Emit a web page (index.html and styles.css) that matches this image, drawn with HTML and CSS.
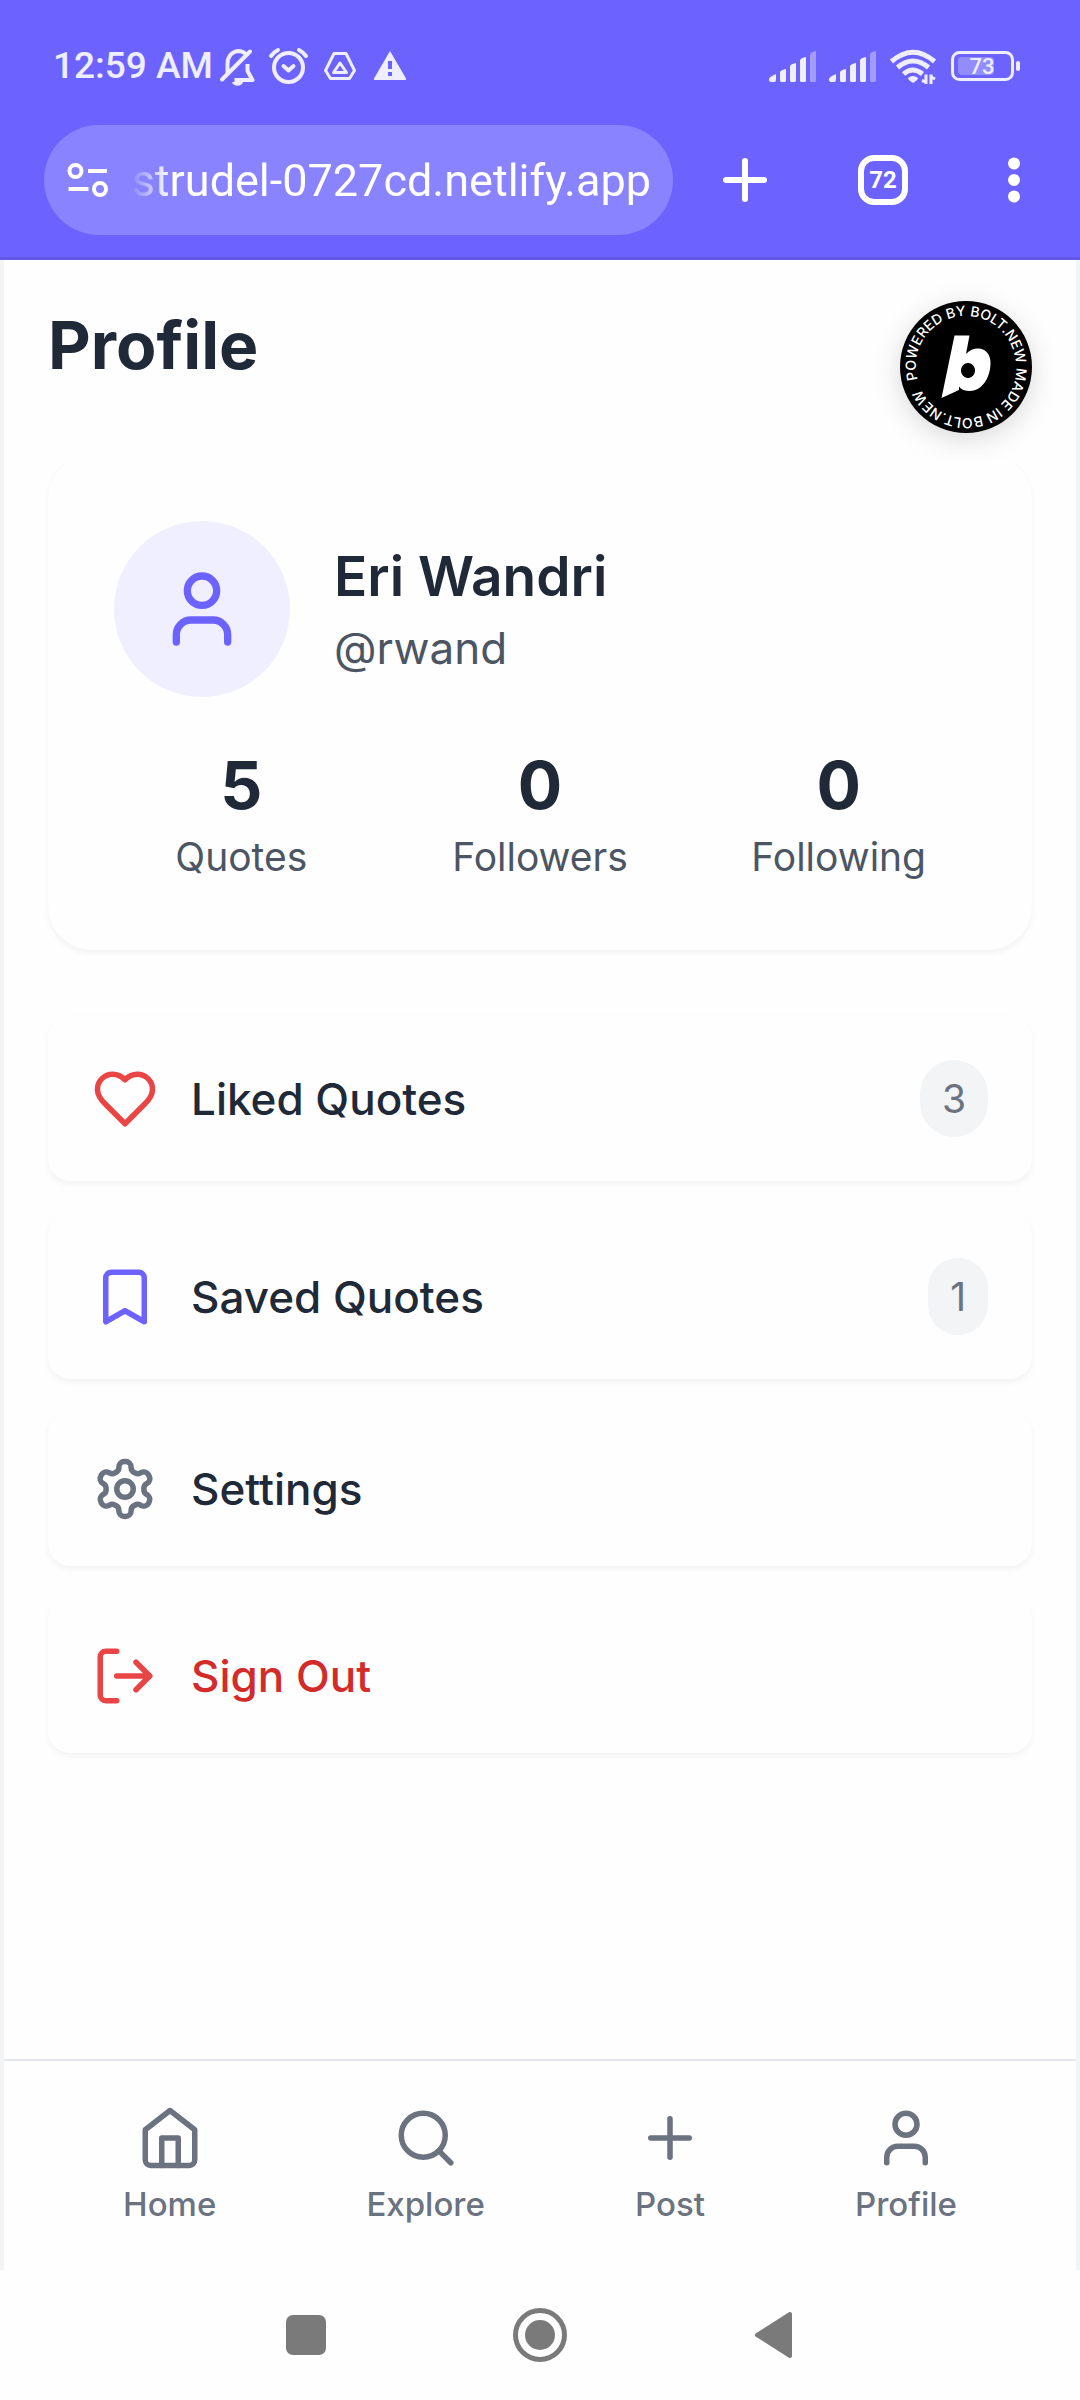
FILE: index.html
```html
<!DOCTYPE html>
<html lang="en">
<head>
<meta charset="utf-8">
<meta name="viewport" content="width=device-width, initial-scale=1">
<title>Profile</title>
<link rel="stylesheet" href="styles.css">
</head>
<body>
<header class="chrome">
  <div class="status">
    <div class="status-left">
      <span class="clock">12:59 AM</span>
      <svg width="37" height="44" viewBox="219 44 37 44" fill="none" stroke="#efeeff" aria-label="Muted">
        <path stroke-width="4" d="M228.500 75V64c0-7 4-12 10-13c5 0 8 2 10 5M248.500 64v7l5 9h-18" stroke-linejoin="round"/>
        <path stroke-width="4" stroke-linecap="round" d="M223 79.500L251 51.500"/>
        <path fill="#efeeff" stroke="none" d="M233 82h11c-1 5-10 5-11 0z"/>
      </svg>
      <svg width="41" height="44" viewBox="269 44 41 44" fill="none" stroke="#efeeff" stroke-width="4" stroke-linecap="round" stroke-linejoin="round" aria-label="Alarm">
        <circle cx="289.500" cy="67.500" r="14.500"/>
        <path d="M284.500 66l5 4.500l5-4.500M272 56q3-4 7-6M300 50q4 2 7 6"/>
      </svg>
      <svg width="36" height="44" viewBox="323 44 36 44" fill="none" stroke="#efeeff" stroke-width="3" stroke-linejoin="round" aria-label="Drive">
        <path d="M335 53.500h12l8.500 17l-5 8h-19l-5-8z"/>
        <path d="M341 63l-6.500 9.500h13z"/>
      </svg>
      <svg width="37" height="44" viewBox="372 44 37 44" aria-label="Warning">
        <path fill="#efeeff" d="M391 51l16 27.500q.5 1.500-1 1.500h-30q-1.500 0-1-1.500z"/>
        <path fill="#6c63ff" d="M389 61h4v8h-4zM389 72h4v4h-4z"/>
      </svg>
    </div>
    <div class="status-right">
      <svg width="48" height="44" viewBox="0 44 48 44" fill="#efeeff" aria-label="Signal 1">
        <path d="M0 79q0-2 7-5v6q0 2-2 2H2q-2 0-2-2zM11 72q1-2 6-3v11q0 2-1 2h-4q-1 0-1-2zM21 66q1-2 6-3v17q0 2-1 2h-4q-1 0-1-2zM31 60q1-2 6-3v23q0 2-1 2h-4q-1 0-1-2z"/>
        <path fill="#a29cff" d="M41 54q1-2 6-3v29q0 2-1 2h-4q-1 0-1-2z"/>
      </svg>
      <svg width="48" height="44" viewBox="0 44 48 44" fill="#efeeff" aria-label="Signal 2">
        <path d="M0 79q0-2 7-5v6q0 2-2 2H2q-2 0-2-2zM11 72q1-2 6-3v11q0 2-1 2h-4q-1 0-1-2zM21 66q1-2 6-3v17q0 2-1 2h-4q-1 0-1-2zM31 60q1-2 6-3v23q0 2-1 2h-4q-1 0-1-2z"/>
        <path fill="#a29cff" d="M41 54q1-2 6-3v29q0 2-1 2h-4q-1 0-1-2z"/>
      </svg>
      <svg width="48" height="44" viewBox="889 44 48 44" fill="none" stroke="#efeeff" aria-label="Wi-Fi">
        <path stroke-width="5" d="M891.500 61.500q21.500-18.500 43 0M897.500 67.500q15.500-13 31 0M903.500 74q9-8 19 0"/>
        <path fill="#efeeff" stroke="none" d="M908 78q5-4 10 0q0 2-5 5q-5-3-5-5z"/>
        <path stroke-width="3" d="M926 74.500v9.500M926 84M922 80.500l4 1.500M931 84v-9.500M935 79l-4-2"/>
      </svg>
      <svg width="72" height="44" viewBox="949 44 72 44" aria-label="Battery 73 percent">
        <rect x="952.500" y="52.500" width="60" height="27" rx="7" fill="none" stroke="#efeeff" stroke-width="3"/>
        <rect x="958" y="57" width="36" height="18" rx="4" fill="#938cff"/>
        <rect x="1016" y="61" width="4" height="10" rx="2" fill="#efeeff"/>
        <text class="battery-text" x="982" y="74" text-anchor="middle">73</text>
      </svg>
    </div>
  </div>
  <div class="toolbar">
    <div class="address">
      <button class="plain" aria-label="Site settings">
        <svg width="42" height="38" viewBox="0 0 42 38" fill="none" stroke="#fff" stroke-width="4">
          <circle cx="9.500" cy="10" r="6"/><path d="M22 10h19M2.500 28h20"/><circle cx="34" cy="28" r="6"/>
        </svg>
      </button>
      <input class="url" type="text" aria-label="Address" value="strudel-0727cd.netlify.app">
    </div>
    <div class="tools">
      <button class="plain" aria-label="New tab">
        <svg width="50" height="50" viewBox="0 0 50 50" stroke="#fff" stroke-width="6" stroke-linecap="round"><path d="M25 6v38M6 25h38"/></svg>
      </button>
      <button class="tabs" aria-label="Tabs">72</button>
      <button class="plain" aria-label="Menu">
        <svg width="12" height="50" viewBox="0 0 12 50" fill="#fff"><circle cx="6" cy="8.500" r="6"/><circle cx="6" cy="25" r="6"/><circle cx="6" cy="41.500" r="6"/></svg>
      </button>
    </div>
  </div>
</header>

<div class="app">
  <main class="content">
    <h1 class="title">Profile</h1>
    <a class="bolt" href="#bolt" aria-label="Made in Bolt.new">
      <svg width="132" height="132" viewBox="0 0 132 132">
        <defs><path id="ring" d="M17.600 78.500A50 50 0 1 1 114.400 53.500A50 50 0 1 1 17.600 78.500"/></defs>
        <circle cx="66" cy="66" r="66" fill="#000"/>
        <text class="bolt-text"><textPath href="#ring">POWERED BY BOLT.NEW MADE IN BOLT.NEW</textPath></text>
        <path fill="#fff" fill-rule="evenodd" d="M54.500 34.500H69.500L66 53C70 48.500 75 47 79 47.500C86.500 48 91 54.500 90.500 63C90 78 81 90 70 90C65 90 61 88.500 59 85.500V89L41.500 97zM68 62A7 7.500 0 1 0 68.010 62z"/>
      </svg>
    </a>

    <section class="card">
      <div class="person">
        <div class="avatar">
          <svg class="icon-lg" viewBox="0 0 24 24"><path d="M19 21v-2a4 4 0 0 0-4-4H9a4 4 0 0 0-4 4v2"/><circle cx="12" cy="7" r="4"/></svg>
        </div>
        <div>
          <h2 class="name">Eri Wandri</h2>
          <p class="handle">@rwand</p>
        </div>
      </div>
      <div class="stats">
        <div><p class="count">5</p><p class="label">Quotes</p></div>
        <div><p class="count">0</p><p class="label">Followers</p></div>
        <div><p class="count">0</p><p class="label">Following</p></div>
      </div>
    </section>

    <div class="menu">
      <button class="item">
        <svg class="icon red" viewBox="0 0 24 24"><path d="M19 14c1.490-1.460 3-3.210 3-5.500A5.500 5.500 0 0 0 16.500 3c-1.760 0-3 .5-4.500 2-1.500-1.500-2.740-2-4.500-2A5.500 5.500 0 0 0 2 8.500c0 2.300 1.500 4.050 3 5.500l7 7Z"/></svg>
        <span class="item-text">Liked Quotes</span><span class="badge">3</span>
      </button>
      <button class="item">
        <svg class="icon violet" viewBox="0 0 24 24"><path d="m19 21-7-4-7 4V5a2 2 0 0 1 2-2h10a2 2 0 0 1 2 2v16z"/></svg>
        <span class="item-text">Saved Quotes</span><span class="badge">1</span>
      </button>
      <button class="item">
        <svg class="icon" viewBox="0 0 24 24"><path d="M12.220 2h-.44a2 2 0 0 0-2 2v.18a2 2 0 0 1-1 1.730l-.43.25a2 2 0 0 1-2 0l-.15-.08a2 2 0 0 0-2.730.73l-.22.38a2 2 0 0 0 .73 2.730l.15.1a2 2 0 0 1 1 1.720v.51a2 2 0 0 1-1 1.740l-.15.09a2 2 0 0 0-.73 2.730l.22.38a2 2 0 0 0 2.730.73l.15-.08a2 2 0 0 1 2 0l.43.25a2 2 0 0 1 1 1.730V20a2 2 0 0 0 2 2h.44a2 2 0 0 0 2-2v-.18a2 2 0 0 1 1-1.730l.43-.25a2 2 0 0 1 2 0l.15.08a2 2 0 0 0 2.730-.73l.22-.39a2 2 0 0 0-.73-2.730l-.15-.08a2 2 0 0 1-1-1.740v-.5a2 2 0 0 1 1-1.740l.15-.09a2 2 0 0 0 .73-2.730l-.22-.38a2 2 0 0 0-2.730-.73l-.15.08a2 2 0 0 1-2 0l-.43-.25a2 2 0 0 1-1-1.730V4a2 2 0 0 0-2-2z"/><circle cx="12" cy="12" r="3"/></svg>
        <span class="item-text">Settings</span>
      </button>
      <button class="item">
        <svg class="icon red" viewBox="0 0 24 24"><path d="M9 21H5a2 2 0 0 1-2-2V5a2 2 0 0 1 2-2h4"/><path d="M16 17l5-5-5-5M21 12H9"/></svg>
        <span class="item-text danger">Sign Out</span>
      </button>
    </div>
  </main>

  <nav class="tabbar">
    <a class="tab" href="#home">
      <svg class="icon" viewBox="0 0 24 24"><path d="m3 9 9-7 9 7v11a2 2 0 0 1-2 2H5a2 2 0 0 1-2-2z"/><path d="M9 22V12h6v10"/></svg>
      <span>Home</span>
    </a>
    <a class="tab" href="#explore">
      <svg class="icon" viewBox="0 0 24 24"><circle cx="11" cy="11" r="8"/><path d="m21 21-4.300-4.300"/></svg>
      <span>Explore</span>
    </a>
    <a class="tab" href="#post">
      <svg class="icon" viewBox="0 0 24 24"><path d="M5 12h14M12 5v14"/></svg>
      <span>Post</span>
    </a>
    <a class="tab" href="#profile">
      <svg class="icon" viewBox="0 0 24 24"><path d="M19 21v-2a4 4 0 0 0-4-4H9a4 4 0 0 0-4 4v2"/><circle cx="12" cy="7" r="4"/></svg>
      <span>Profile</span>
    </a>
  </nav>
</div>

<footer class="system">
  <button class="plain" aria-label="Recent apps">
    <svg width="54" height="54" viewBox="0 0 54 54"><rect x="7" y="7" width="40" height="40" rx="7" fill="#7a7a7a"/></svg>
  </button>
  <button class="plain" aria-label="Home screen">
    <svg width="54" height="54" viewBox="0 0 54 54"><circle cx="27" cy="27" r="24.500" fill="none" stroke="#7a7a7a" stroke-width="5"/><circle cx="27" cy="27" r="15" fill="#7a7a7a"/></svg>
  </button>
  <button class="plain" aria-label="Back">
    <svg width="54" height="54" viewBox="0 0 54 54"><path d="M10 27L43 6V48z" fill="#7a7a7a" stroke="#7a7a7a" stroke-width="4" stroke-linejoin="round"/></svg>
  </button>
</footer>
</body>
</html>
```
FILE: styles.css
```css
* {
  box-sizing: border-box;
  margin: 0;
  padding: 0;
}

body {
  display: flex;
  flex-direction: column;
  min-height: 100vh;
  background: #fefefe;
  color: #1f2937;
  font-family: Inter, "Liberation Sans", sans-serif;
}

svg {
  display: block;
  flex-shrink: 0;
}

button {
  border: 0;
  background: none;
  color: inherit;
  font: inherit;
  cursor: pointer;
}

/* Browser chrome */
.chrome {
  position: relative;
  z-index: 1;
  padding: 44px 0 22px;
  background: #6c63ff;
  box-shadow: 0 3px 0 #6159e6;
  color: #fff;
  font-family: Roboto, "Liberation Sans", sans-serif;
}

.status {
  display: flex;
  justify-content: space-between;
  padding: 0 59px 0 53px;
  margin-bottom: 37px;
}

.status-left,
.status-right {
  display: flex;
  align-items: center;
  gap: 12px;
}

.status-left {
  gap: 13px;
}

.clock {
  margin-right: -8px;
  color: #efeeff;
  font-size: 37px;
  font-weight: 500;
  line-height: 44px;
}

.battery-text {
  fill: #efeeff;
  font-size: 22px;
  font-weight: 500;
}

.toolbar {
  display: flex;
  align-items: center;
  gap: 47px;
  padding: 0 60px 0 44px;
}

.address {
  display: flex;
  flex: 1;
  align-items: center;
  gap: 22px;
  min-width: 0;
  height: 110px;
  padding: 0 22px;
  border-radius: 55px;
  background: #8983ff;
}

.url {
  flex: 1;
  min-width: 0;
  height: 66px;
  border: 0;
  outline: 0;
  background: none;
  color: #fff;
  font-family: Roboto, "Liberation Sans", sans-serif;
  font-size: 45px;
  text-align: right;
  -webkit-mask-image: linear-gradient(to right, transparent, #000 40px);
  mask-image: linear-gradient(to right, transparent, #000 40px);
}

.tools {
  display: flex;
  align-items: center;
  gap: 88px;
}

.tools .plain:last-child {
  margin-left: 12px;
}

.tabs {
  width: 50px;
  height: 50px;
  border: 6px solid #fff;
  border-radius: 16px;
  font-size: 24px;
  font-weight: 700;
  line-height: 38px;
}

/* App */
.app {
  display: flex;
  flex: 1;
  flex-direction: column;
  border: solid #f3f4f6;
  border-width: 0 4px;
}

.content {
  position: relative;
  flex: 1;
  padding: 44px;
}

.title {
  margin-bottom: 66px;
  font-size: 66px;
  font-weight: 700;
  line-height: 88px;
}

.bolt {
  position: absolute;
  top: 44px;
  right: 44px;
  border-radius: 50%;
  box-shadow: 0 6px 28px rgba(0, 0, 0, 0.15);
}

.bolt-text {
  fill: #fff;
  font-size: 14px;
  font-weight: 500;
}

.card {
  margin-bottom: 66px;
  padding: 66px;
  border-radius: 44px;
  background: #fefefe;
  box-shadow: 0 3px 6px rgba(0, 0, 0, 0.05);
}

.person {
  display: flex;
  align-items: center;
  gap: 44px;
  margin-bottom: 44px;
}

.avatar {
  padding: 44px;
  border-radius: 50%;
  background: #f0efff;
}

.icon,
.icon-lg {
  width: 66px;
  height: 66px;
  fill: none;
  stroke: #6b7280;
  stroke-width: 2;
  stroke-linecap: round;
  stroke-linejoin: round;
}

.icon-lg {
  width: 88px;
  height: 88px;
  stroke: #6c63ff;
}

.red {
  stroke: #ea4545;
}

.violet {
  stroke: #6c63ff;
}

.name {
  font-size: 55px;
  font-weight: 600;
  line-height: 77px;
}

.handle {
  color: #4b5563;
  font-size: 44px;
  line-height: 66px;
}

.stats {
  display: grid;
  grid-template-columns: repeat(3, 1fr);
  gap: 44px;
  text-align: center;
}

.count {
  font-size: 66px;
  font-weight: 700;
  line-height: 88px;
}

.label {
  color: #4b5563;
  font-size: 39px;
  line-height: 55px;
}

.menu {
  display: flex;
  flex-direction: column;
  gap: 33px;
}

.item {
  display: flex;
  align-items: center;
  gap: 33px;
  padding: 44px;
  border-radius: 22px;
  background: #fefefe;
  box-shadow: 0 3px 6px rgba(0, 0, 0, 0.05);
  text-align: left;
}

.item-text {
  flex: 1;
  font-size: 44px;
  font-weight: 500;
  line-height: 66px;
}

.danger {
  color: #d32a2a;
}

.badge {
  padding: 11px 22px;
  border-radius: 44px;
  background: #f3f4f6;
  color: #6b7280;
  font-size: 39px;
  line-height: 55px;
}

.tabbar {
  display: flex;
  justify-content: space-around;
  padding: 44px;
  border-top: 2px solid #e5e7eb;
}

.tab {
  display: flex;
  flex-direction: column;
  align-items: center;
  gap: 11px;
  color: #6b7280;
  font-size: 33px;
  font-weight: 500;
  line-height: 44px;
  text-decoration: none;
}

/* System navigation */
.system {
  display: flex;
  justify-content: center;
  gap: 180px;
  padding: 38px 0;
}
```
